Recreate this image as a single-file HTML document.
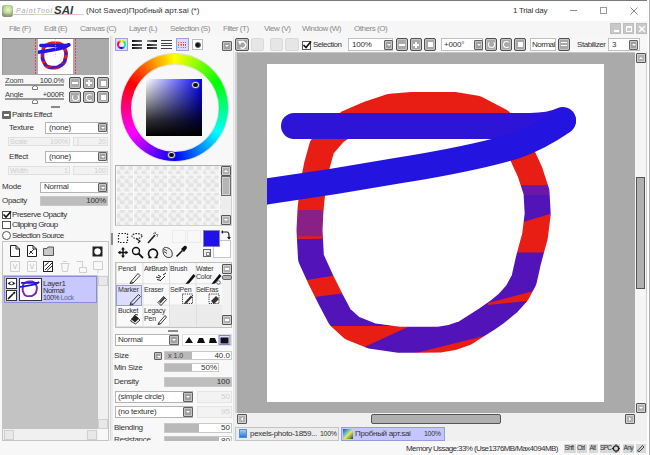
<!DOCTYPE html>
<html><head><meta charset="utf-8">
<style>
*{box-sizing:border-box;margin:0;padding:0}
html,body{width:650px;height:455px;overflow:hidden;background:#f0f0f0;font-family:"Liberation Sans",sans-serif;font-size:8px;color:#222}
.a{position:absolute}
.t{position:absolute;white-space:nowrap;line-height:10px}
.btn{position:absolute;width:12px;height:12px;border:1px solid #505050;border-radius:2px;background:#a9a9a9;box-shadow:inset 0 0 0 1px #c6c6c6}
.dd{position:absolute;width:9px;height:9px;border:1px solid #606060;border-radius:1px;background:#a0a0a0;box-shadow:inset 0 0 0 1px #c4c4c4}
.dd:after{content:"";position:absolute;left:2px;top:3px;border-left:2px solid transparent;border-right:2px solid transparent;border-top:2px solid #fff}
.combo{position:absolute;background:#fff;border:1px solid #b4b4b4}
.sl{position:absolute;background:#f4f4f4;border:1px solid #c8c8c8}
.fill{position:absolute;left:0;top:0;bottom:0;background:#b9b9b9}
.sb{position:absolute;background:#f0f0f0}
.sbb{position:absolute;width:10px;height:10px;border:1px solid #555;border-radius:1px;background:#b0b0b0;box-shadow:inset 0 0 0 1px #d0d0d0}
.gray{color:#8a8a8a}
</style></head><body>

<!-- title bar -->
<div class="a" style="left:0;top:0;width:650px;height:21px;background:#fff;border-top:1px solid #7a7a7a"></div>


<!-- menu bar -->
<div class="a" style="left:0;top:21px;width:648px;height:15px;background:#f6f6f6"></div>

<!-- title content -->
<div class="a" style="left:1.5px;top:5px;width:11px;height:11.5px;border-radius:3px;background:radial-gradient(circle at 55% 40%,#eaf5c0 0%,#c8e0a0 35%,#8fb880 70%,#6f9070 100%);box-shadow:inset 0 -3px 2px rgba(140,90,110,.35)"></div>
<div class="t" style="left:16px;top:6px;font-size:7px;font-style:italic;color:#a8a8a8;letter-spacing:0.9px">PaintTool</div>
<div class="a" style="left:12px;top:14px;width:72px;height:1px;background:linear-gradient(90deg,#d8b8e0,#c8e0b0 40%,#e8b0c8 80%,#f4d0d0)"></div>
<div class="t" style="left:54px;top:4px;font-size:11.5px;line-height:13px;font-weight:bold;font-style:italic;color:#3a3a3a">SAI</div>
<div class="t" style="left:86px;top:6px;font-size:8px;color:#333">(Not Saved)Пробный арт.sai (*)</div>
<div class="t" style="left:513px;top:6px;font-size:8px;color:#333;letter-spacing:-0.25px">1 Trial day</div>
<div class="a" style="left:570px;top:10px;width:7px;height:1px;background:#8a8a8a"></div>
<div class="a" style="left:600px;top:6.5px;width:7px;height:7px;border:1px solid #9a9a9a"></div>
<svg class="a" style="left:630px;top:7px" width="8" height="8"><path d="M0.5,0.5 L7.5,7.5 M7.5,0.5 L0.5,7.5" stroke="#8a8a8a" stroke-width="1"/></svg>

<!-- menu -->
<div class="t gray" style="left:9px;top:24px;font-size:8px;letter-spacing:-0.45px">File (F)</div>
<div class="t gray" style="left:44px;top:24px;font-size:8px;letter-spacing:-0.45px">Edit (E)</div>
<div class="t gray" style="left:80px;top:24px;font-size:8px;letter-spacing:-0.45px">Canvas (C)</div>
<div class="t gray" style="left:129px;top:24px;font-size:8px;letter-spacing:-0.45px">Layer (L)</div>
<div class="t gray" style="left:170px;top:24px;font-size:8px;letter-spacing:-0.45px">Selection (S)</div>
<div class="t gray" style="left:223px;top:24px;font-size:8px;letter-spacing:-0.45px">Filter (T)</div>
<div class="t gray" style="left:264px;top:24px;font-size:8px;letter-spacing:-0.45px">View (V)</div>
<div class="t gray" style="left:302px;top:24px;font-size:8px;letter-spacing:-0.45px">Window (W)</div>
<div class="t gray" style="left:354px;top:24px;font-size:8px;letter-spacing:-0.45px">Others (O)</div>
<!-- mdi buttons -->
<div class="a" style="left:610px;top:23px;width:11px;height:10.5px;background:#c9c9c9;border:1px solid #bdbdbd"><div class="a" style="left:2.5px;top:5.5px;width:5px;height:2px;background:#fff"></div></div>
<div class="a" style="left:623px;top:23px;width:10.5px;height:10.5px;background:#c9c9c9;border:1px solid #bdbdbd"><div class="a" style="left:2px;top:2px;width:5.5px;height:5.5px;border:1px solid #fff;border-top-width:2px"></div></div>
<div class="a" style="left:636px;top:23px;width:10.5px;height:10.5px;background:#c9c9c9;border:1px solid #bdbdbd"><svg class="a" style="left:1px;top:1px" width="8" height="8"><path d="M1.2,1.2 L6.8,6.8 M6.8,1.2 L1.2,6.8" stroke="#fff" stroke-width="1.5"/></svg></div>

<!-- left panel bg -->
<div class="a" style="left:0;top:36px;width:110px;height:405px;background:#f7f7f7"></div>
<div class="a" style="left:110px;top:36px;width:1px;height:405px;background:#d8d8d8"></div>

<!-- ===== LEFT PANEL ===== -->
<div class="a" style="left:2px;top:38px;width:107px;height:37px;background:#aaa;border-top:1px solid #7c7c7c;border-left:1px solid #999"></div>
<div class="a" style="left:38px;top:39px;width:35px;height:35px;background:#fff;overflow:hidden">
<svg width="35" height="35" viewBox="267 64 337 338"><g mask="url(#ring2)"><use href="#stripes"/></g><use href="#b1" stroke="#2d14d7" stroke-width="34" fill="none" stroke-linecap="round"/><use href="#b2" stroke="#2314e0" stroke-width="34" fill="none" stroke-linecap="round"/><line x1="435" y1="64" x2="435" y2="240" stroke="#f0a0c0" stroke-width="6" stroke-dasharray="14 14"/></svg>
</div>
<div class="a" style="left:35px;top:39px;width:1px;height:35px;background:repeating-linear-gradient(180deg,#e04060 0 2px,#d0a0a8 2px 3px)"></div>
<div class="a" style="left:75px;top:39px;width:1px;height:35px;background:repeating-linear-gradient(180deg,#e04060 0 2px,#d0a0a8 2px 3px)"></div>

<div class="t" style="left:5px;top:76px;font-size:7.5px;color:#444;letter-spacing:-0.2px">Zoom</div>
<div class="t" style="left:34px;top:76px;width:30px;text-align:right;font-size:7.5px;color:#333;letter-spacing:-0.2px">100.0%</div>
<div class="a" style="left:5px;top:84px;width:59px;height:2px;background:#9a9a9a"></div>
<svg class="a" style="left:32px;top:85px" width="6" height="5"><path d="M0.5,4.5 L0.5,2 L3,0.5 L5.5,2 L5.5,4.5 Z" fill="#fff" stroke="#777" stroke-width="1"/></svg>
<div class="t" style="left:5px;top:90px;font-size:7.5px;color:#444;letter-spacing:-0.2px">Angle</div>
<div class="t" style="left:34px;top:90px;width:30px;text-align:right;font-size:7.5px;color:#333;letter-spacing:-0.2px">+000R</div>
<div class="a" style="left:5px;top:98px;width:59px;height:2px;background:#9a9a9a"></div>
<svg class="a" style="left:32px;top:99px" width="6" height="5"><path d="M0.5,4.5 L0.5,2 L3,0.5 L5.5,2 L5.5,4.5 Z" fill="#fff" stroke="#777" stroke-width="1"/></svg>

<div class="btn" style="left:69px;top:77px"><div class="a" style="left:2px;top:4px;width:6px;height:2px;background:#fff"></div></div>
<div class="btn" style="left:83px;top:77px"><div class="a" style="left:2px;top:4px;width:6px;height:2px;background:#fff"></div><div class="a" style="left:4px;top:2px;width:2px;height:6px;background:#fff"></div></div>
<div class="btn" style="left:97px;top:77px"><div class="a" style="left:2.5px;top:2.5px;width:5px;height:5px;background:#fff"></div></div>
<div class="btn" style="left:69px;top:91px"><div class="a" style="left:1.5px;top:1.5px;width:7px;height:7px;border:1.5px solid #fff;border-radius:50%;border-top-color:transparent"></div></div>
<div class="btn" style="left:83px;top:91px"><div class="a" style="left:1.5px;top:1.5px;width:7px;height:7px;border:1.5px solid #fff;border-radius:50%;border-right-color:transparent"></div></div>
<div class="btn" style="left:97px;top:91px"><div class="a" style="left:2.5px;top:2.5px;width:5px;height:5px;background:#fff"></div></div>
<div class="a" style="left:51px;top:106px;width:9px;height:2px;background:#8a8a8a"></div>

<!-- paints effect -->
<div class="a" style="left:2px;top:110.5px;width:9px;height:8px;background:#6a6a6a;border-radius:1px"><div class="a" style="left:2px;top:3px;width:5px;height:2px;background:#fff"></div></div>
<div class="t" style="left:12px;top:110px;font-size:8px;color:#333;letter-spacing:-0.37px">Paints Effect</div>
<div class="t" style="left:9px;top:123px;font-size:8px;color:#333;letter-spacing:-0.2px">Texture</div>
<div class="combo" style="left:45px;top:122px;width:63px;height:12px"></div>
<div class="t" style="left:49px;top:123px;font-size:8px;color:#333;letter-spacing:-0.2px">(none)</div>
<div class="dd" style="left:98px;top:123px"></div>
<div class="sl" style="left:8px;top:137px;width:62px;height:9px;border-color:#e0e0e0;background:#f2f2f2"></div>
<div class="t" style="left:10px;top:137px;font-size:7px;color:#cfcfcf">Scale</div>
<div class="t" style="left:40px;top:137px;width:28px;text-align:right;font-size:7px;color:#cfcfcf">100%</div>
<div class="sl" style="left:73px;top:137px;width:35px;height:9px;border-color:#e0e0e0;background:#f2f2f2"></div>
<div class="a" style="left:77px;top:138px;width:2px;height:7px;background:#e6e6e6"></div>
<div class="t" style="left:80px;top:137px;width:26px;text-align:right;font-size:7px;color:#cfcfcf">20</div>

<div class="t" style="left:9px;top:152px;font-size:8px;color:#333;letter-spacing:-0.2px">Effect</div>
<div class="combo" style="left:45px;top:151px;width:63px;height:12px"></div>
<div class="t" style="left:49px;top:152px;font-size:8px;color:#333;letter-spacing:-0.2px">(none)</div>
<div class="dd" style="left:98px;top:152px"></div>
<div class="sl" style="left:8px;top:166px;width:62px;height:9px;border-color:#e0e0e0;background:#f2f2f2"></div>
<div class="t" style="left:10px;top:166px;font-size:7px;color:#cfcfcf">Width</div>
<div class="t" style="left:40px;top:166px;width:28px;text-align:right;font-size:7px;color:#cfcfcf">1</div>
<div class="sl" style="left:73px;top:166px;width:35px;height:9px;border-color:#e0e0e0;background:#f2f2f2"></div>
<div class="t" style="left:80px;top:166px;width:26px;text-align:right;font-size:7px;color:#cfcfcf">100</div>

<div class="t" style="left:2px;top:182px;font-size:8px;color:#333;letter-spacing:-0.2px">Mode</div>
<div class="combo" style="left:40px;top:182px;width:68px;height:11px"></div>
<div class="t" style="left:44px;top:182px;font-size:8px;color:#333;letter-spacing:-0.2px">Normal</div>
<div class="dd" style="left:98px;top:183px"></div>
<div class="t" style="left:2px;top:196px;font-size:8px;color:#333;letter-spacing:-0.3px">Opacity</div>
<div class="sl" style="left:40px;top:196px;width:68px;height:10px;background:#bdbdbd;border-color:#c8c8c8"></div>
<div class="t" style="left:60px;top:196px;width:46px;text-align:right;font-size:8px;color:#333;letter-spacing:-0.2px">100%</div>

<div class="a" style="left:2px;top:211px;width:9px;height:8px;background:#fff;border:1px solid #555"></div>
<svg class="a" style="left:2px;top:210px" width="10" height="9"><path d="M1.5,4.5 L4,7 L9,1.5" stroke="#111" stroke-width="1.6" fill="none"/></svg>
<div class="t" style="left:12px;top:210px;font-size:8px;color:#333;letter-spacing:-0.4px">Preserve Opacity</div>
<div class="a" style="left:2px;top:221px;width:9px;height:8px;background:#fff;border:1px solid #555"></div>
<div class="t" style="left:12px;top:220px;font-size:8px;color:#333;letter-spacing:-0.55px">Clipping Group</div>
<div class="a" style="left:2px;top:231px;width:9px;height:9px;background:#fff;border:1px solid #555;border-radius:50%"></div>
<div class="t" style="left:12px;top:231px;font-size:8px;color:#333;letter-spacing:-0.55px">Selection Source</div>

<!-- middle panel bg -->
<div class="a" style="left:111px;top:36px;width:122px;height:405px;background:#f8f8f8"></div>
<div class="a" style="left:233px;top:36px;width:1px;height:405px;background:#e6e6e6"></div>

<!-- ===== MIDDLE PANEL ===== -->
<div class="a" style="left:111px;top:36px;width:2px;height:405px;background:#ececec"></div>
<div class="a" style="left:111px;top:233px;width:2px;height:12px;background:#8c8c8c"></div>
<!-- color mode icons -->
<div class="a" style="left:115px;top:38px;width:13px;height:13px;background:#dcdcff;border:1px solid #a0a0e0"></div>
<div class="a" style="left:117px;top:40px;width:9px;height:9px;border-radius:50%;background:conic-gradient(#ff0,#0f0,#0ff,#00f,#f0f,#f00,#ff0)"></div>
<div class="a" style="left:119px;top:42px;width:5px;height:5px;border-radius:50%;background:#f4f4ff"></div>
<div class="a" style="left:132px;top:40px;width:10px;height:2px;background:linear-gradient(90deg,#111,#666)"></div>
<div class="a" style="left:132px;top:43.5px;width:10px;height:2px;background:linear-gradient(90deg,#111,#666)"></div>
<div class="a" style="left:132px;top:47px;width:10px;height:2px;background:linear-gradient(90deg,#111,#666)"></div>
<div class="a" style="left:147px;top:40px;width:10px;height:2px;background:linear-gradient(90deg,#999,#111)"></div>
<div class="a" style="left:147px;top:43.5px;width:10px;height:2px;background:linear-gradient(90deg,#111,#777)"></div>
<div class="a" style="left:147px;top:47px;width:10px;height:2px;background:linear-gradient(90deg,#111,#555)"></div>
<div class="a" style="left:161px;top:40px;width:11px;height:1px;background:#444"></div>
<div class="a" style="left:161px;top:42.5px;width:11px;height:1px;background:#444"></div>
<div class="a" style="left:161px;top:45px;width:11px;height:1px;background:#444"></div>
<div class="a" style="left:161px;top:47.5px;width:11px;height:1px;background:#444"></div>
<div class="a" style="left:176px;top:38px;width:13px;height:13px;background:#dcdcff;border:1px solid #a0a0e0"></div>
<div class="a" style="left:178px;top:41px;width:9px;height:7px;background:radial-gradient(circle,#e03030 0.6px,transparent 0.9px) 0 0/2.25px 2.33px,linear-gradient(90deg,#f44,#fd4,#4d4,#4ae,#a4e)"></div>
<div class="a" style="left:178px;top:41px;width:9px;height:7px;background:repeating-linear-gradient(90deg,transparent 0 1.25px,#dcdcff 1.25px 2.25px),repeating-linear-gradient(0deg,transparent 0 1.33px,#dcdcff 1.33px 2.33px)"></div>
<div class="a" style="left:192px;top:39px;width:11px;height:11px;background:#fff;border:1px solid #bbb"></div>
<div class="a" style="left:194.5px;top:41.5px;width:6px;height:6px;border-radius:50%;background:radial-gradient(circle at 45% 50%,#111 30%,#888 75%,transparent 80%)"></div>

<!-- color wheel -->
<div class="a" style="left:120px;top:53px;width:109px;height:109px;border-radius:50%;background:#dcdcdc"></div>
<div class="a" style="left:121px;top:54px;width:107px;height:107px;border-radius:50%;background:conic-gradient(#ff0 0deg,#0f0 60deg,#0ff 120deg,#00f 180deg,#f0f 240deg,#f00 300deg,#ff0 360deg)"></div>
<div class="a" style="left:130.5px;top:63.5px;width:88px;height:88px;border-radius:50%;background:#e4e4e4"></div>
<div class="a" style="left:131.5px;top:64.5px;width:86px;height:86px;border-radius:50%;background:#f8f8f8"></div>
<div class="a" style="left:145.5px;top:78.5px;width:56.5px;height:57px;background:linear-gradient(180deg,rgba(0,0,0,0) 0%,rgba(0,0,0,.42) 40%,rgba(0,0,0,.8) 72%,#000 100%),linear-gradient(90deg,#fff 0%,#0000ff 100%)"></div>
<div class="a" style="left:192px;top:81.5px;width:6.5px;height:6.5px;border-radius:50%;background:#111;border:1.5px solid #e8e8e8;box-shadow:0 0 0 0.6px #666"></div>
<div class="a" style="left:168px;top:151.5px;width:6.5px;height:6.5px;border-radius:50%;background:#111;border:1.5px solid #e8e8e8;box-shadow:0 0 0 0.6px #666"></div>


<!-- palette -->
<div class="a" style="left:115px;top:165px;width:117px;height:61px;border:1px solid #b0b0b0;border-right-color:#d0d0d0;border-bottom-color:#d0d0d0;background:
linear-gradient(90deg,#fcfcfc 1px,transparent 1px) 17px 0/17.2px 100%,
linear-gradient(0deg,transparent 16.2px,#fcfcfc 16.2px) 0 -8.7px/100% 17.2px,
conic-gradient(#e3e3e3 25%,#f3f3f3 0 50%,#e3e3e3 0 75%,#f3f3f3 0) 0 0/8.6px 8.6px"></div>
<div class="sb" style="left:221px;top:166px;width:10px;height:59px;background:#ededed"></div>
<div class="sbb" style="left:221px;top:166px"><div class="a" style="left:2px;top:2.5px;border-left:2.5px solid transparent;border-right:2.5px solid transparent;border-bottom:2.5px solid #fff"></div></div>
<div class="a" style="left:221px;top:176px;width:10px;height:20px;border:1px solid #6a6a6a;background:#b5b5b5;box-shadow:inset 0 0 0 1px #d0d0d0"></div>
<div class="sbb" style="left:221px;top:215px"><div class="a" style="left:2px;top:3px;border-left:2.5px solid transparent;border-right:2.5px solid transparent;border-top:2.5px solid #fff"></div></div>

<!-- tools -->
<svg class="a" style="left:116px;top:230px" width="60" height="30">
<rect x="2.5" y="3.5" width="9" height="9" fill="none" stroke="#222" stroke-width="1.2" stroke-dasharray="1.5 1.5"/>
<ellipse cx="21" cy="6" rx="5" ry="2.5" fill="none" stroke="#222" stroke-width="1.2" stroke-dasharray="1.5 1.2"/>
<path d="M20,8.5 L24,11 L22,13" fill="none" stroke="#222" stroke-width="1.2"/>
<path d="M32,13 L39,5" stroke="#222" stroke-width="1.6"/>
<path d="M39,3 L41,5 M37,4 L40,2 M41,7 L42,4" stroke="#555" stroke-width="0.8"/>
<path d="M7,18 L7,27 M2.5,22.5 L11.5,22.5" stroke="#111" stroke-width="1.5"/>
<path d="M7,17 L5,19.5 L9,19.5 Z M7,28 L5,25.5 L9,25.5 Z M2,22.5 L4.5,20.5 L4.5,24.5 Z M12,22.5 L9.5,20.5 L9.5,24.5 Z" fill="#111"/>
<circle cx="20" cy="21" r="3.5" fill="none" stroke="#111" stroke-width="1.4"/>
<path d="M22.5,23.5 L27,28" stroke="#111" stroke-width="1.8"/>
<path d="M34,27 A4.5,4.5 0 1 1 40,27" fill="none" stroke="#111" stroke-width="1.6"/>
<path d="M32.5,27.5 L35.5,27.5 M38.5,27.5 L41.5,27.5" stroke="#111" stroke-width="1.4"/>
<path d="M47,20 C47,17 50,17 52,18 C55,19 57,22 56,26 C55,28 51,28 49,26 C47,24 47,22 47,20 Z" fill="#eee" stroke="#222" stroke-width="0.9"/>
<path d="M48,19 L51,21 M48,21.5 L51,23.5" stroke="#222" stroke-width="0.8"/>
</svg>
<div class="a" style="left:172px;top:229.5px;width:14px;height:13.5px;border:1px solid #ececec"></div>
<div class="a" style="left:186.5px;top:229.5px;width:14px;height:13.5px;border:1px solid #ececec"></div>
<svg class="a" style="left:175px;top:245px" width="13" height="13"><path d="M1.5,11.5 L7.5,5.5" stroke="#111" stroke-width="1.6"/><path d="M6,4 L9.5,0.8 Q12,0.5 12,3 L9,7 Z" fill="#111"/></svg>
<div class="a" style="left:203px;top:230px;width:17px;height:17px;background:#1f12e6;border:1px solid #9898c8;box-shadow:inset 0 0 0 1px #fff"></div>
<div class="a" style="left:213px;top:240px;width:18px;height:18px;background:#fff;border:1px solid #c4c4c4"></div>
<div class="a" style="left:203px;top:230px;width:17px;height:17px;background:#1f12e6;border:1px solid #7f7fbf"></div>
<svg class="a" style="left:221px;top:230px" width="10" height="10"><path d="M2,2 L6,2 Q8,2 8,6 L8,9" fill="none" stroke="#222" stroke-width="1.2"/><path d="M2,0 L0,2 L2,4 Z M6,7 L10,7 L8,9.5 Z" fill="#222"/></svg>
<div class="a" style="left:203px;top:249px;width:8px;height:8px;border:1px solid #666;background:#eee"><div class="a" style="left:2px;top:2px;width:4px;height:4px;border:1px solid #888"></div></div>

<!-- tool grid -->
<div class="a" style="left:115px;top:262px;width:117px;height:66px;border:1px solid #c0c0c0;background:#fafafa"></div>
<div class="a" style="left:116px;top:263px;width:106px;height:64px;background:
linear-gradient(90deg,#dedede 1px,transparent 1px) 26.5px 0/26.5px 100%,
linear-gradient(0deg,#dedede 1px,transparent 1px) 0 21.3px/100% 21.3px"></div>
<div class="a" style="left:169px;top:306px;width:53px;height:21px;background:#ebebeb;border-left:1px solid #dedede"></div>
<div class="a" style="left:195.5px;top:306px;width:1px;height:21px;background:#dedede"></div>
<div class="a" style="left:116px;top:284.5px;width:26px;height:21px;background:#dcdcff;border:1px solid #9a9ad8"></div>
<div class="t" style="left:118px;top:264px;font-size:7px;color:#333;letter-spacing:-0.2px">Pencil</div>
<div class="t" style="left:144px;top:264px;font-size:7px;color:#333;letter-spacing:-0.45px">AirBrush</div>
<div class="t" style="left:170px;top:264px;font-size:7px;color:#333;letter-spacing:-0.2px">Brush</div>
<div class="t" style="left:196px;top:264px;font-size:7px;color:#333;letter-spacing:-0.2px">Water</div>
<div class="t" style="left:196px;top:272px;font-size:7px;color:#333;letter-spacing:-0.2px">Color</div>
<div class="t" style="left:118px;top:285px;font-size:7px;color:#333;letter-spacing:-0.2px">Marker</div>
<div class="t" style="left:144px;top:285px;font-size:7px;color:#333;letter-spacing:-0.2px">Eraser</div>
<div class="t" style="left:170px;top:285px;font-size:7px;color:#333;letter-spacing:-0.2px">SelPen</div>
<div class="t" style="left:196px;top:285px;font-size:7px;color:#333;letter-spacing:-0.35px">SelEras</div>
<div class="t" style="left:118px;top:306px;font-size:7px;color:#333;letter-spacing:-0.2px">Bucket</div>
<div class="t" style="left:144px;top:306px;font-size:7px;color:#333;letter-spacing:-0.2px">Legacy</div>
<div class="t" style="left:144px;top:314px;font-size:7px;color:#333;letter-spacing:-0.2px">Pen</div>
<svg class="a" style="left:116px;top:263px" width="106" height="64">
<g fill="none" stroke="#222" stroke-width="0.9" stroke-linejoin="round">
<path d="M15,18.5 L22,10.5 L24,12.5 L17,20 Z M15,18.5 L14,20.5 L17,20"/>
<path d="M15,39.5 L22.5,31.5 L24.5,33.5 L17,41.5 Z M15,39.5 L14,42 L17,41.5"/>
<path d="M42,39.5 L47.5,33.5 L50.5,36.5 L45,42.5 Z"/>
<path d="M14.5,58 L19,53 L24,57 L19.5,61 Z"/>
<path d="M43,59.5 L49,52.5 L50.5,54 L44.5,61 Z M43,59.5 L42,61.5 L44.5,61"/>
<path d="M40,14 L44,15 M41,16.5 L45,17.5 M42,12 L45,14 M44,18 L49,13 M47,12 L50,10" stroke-width="1"/>
<path d="M66.5,31 L76.5,31 L76.5,40.5 L66.5,40.5 Z M93,31 L103,31 L103,40.5 L93,40.5 Z" stroke-dasharray="1.2 1"/>
</g>
<path d="M43,39 L48,33.5 L49.5,35 L44.5,40.5 Z" fill="#444"/>
<path d="M15,56 L19,52 L23,55.5 L19,59.5 Z" fill="#222"/>
<path d="M17.5,53.5 Q19,50 22,52" fill="none" stroke="#222" stroke-width="0.9"/>
<path d="M71,19 L77.5,11 L79.5,13 L73,20.5 Z M71,19 L69.5,21 L73,20.5 Z" fill="#111"/>
<path d="M97,19 L103.5,11 L105.5,13 L99,20.5 Z M97,19 L95.5,21 L99,20.5 Z" fill="#111"/>
<circle cx="102.5" cy="19.5" r="1.8" fill="none" stroke="#555" stroke-width="0.8"/>
<path d="M69,39 L75,32.5 L76.5,34 L70.5,40.5 Z M69,39 L68,41 L70.5,40.5 Z" fill="#333"/><path d="M95,38 L100,33 L103,36 L98,41 Z" fill="#333"/>
</svg>
<div class="sb" style="left:222px;top:263px;width:9px;height:64px;background:#f2f2f2"></div>
<div class="sbb" style="left:222px;top:264px;width:10px;height:10px"><div class="a" style="left:2px;top:3px;width:4px;height:2px;background:#fff"></div></div>
<div class="a" style="left:222px;top:275px;width:10px;height:5px;border:1px solid #666;border-radius:2px;background:#b8b8b8"></div>
<div class="sbb" style="left:222px;top:315px;width:10px;height:10px"><div class="a" style="left:2px;top:3px;width:4px;height:2px;background:#fff"></div></div>
<div class="a" style="left:168px;top:330px;width:10px;height:2px;background:#8a8a8a"></div>

<!-- brush settings -->
<div class="combo" style="left:115px;top:334px;width:64px;height:12px"></div>
<div class="t" style="left:118px;top:335px;font-size:8px;color:#333;letter-spacing:-0.2px">Normal</div>
<div class="dd" style="left:169px;top:335px;width:10px;height:10px"></div>
<div class="a" style="left:182px;top:334px;width:50px;height:12px;background:#fff;border:1px solid #dcdcdc"></div>
<svg class="a" style="left:183px;top:335px" width="48" height="10">
<path d="M2,8 L6,2 L10,8 Z" fill="#111"/>
<path d="M14,8 L16,3 L20,3 L22,8 Z" fill="#111"/>
<path d="M26,8 L27,3 L32,3 L34,8 Z" fill="#111"/>
<rect x="36" y="0.5" width="11" height="9" fill="#dcdcff" stroke="#8080c8"/>
<rect x="37.5" y="2.5" width="8" height="6" fill="#111"/>
</svg>
<div class="t" style="left:114px;top:351px;font-size:8px;color:#333;letter-spacing:-0.2px">Size</div>
<div class="dd" style="left:154px;top:352px;width:8px;height:8px"></div>
<div class="sl" style="left:164px;top:351px;width:68px;height:9px;background:#fff;border-color:#c8c8c8"><div class="fill" style="width:27px"></div></div>
<div class="t" style="left:168px;top:351px;font-size:7px;color:#444">x 1.0</div>
<div class="t" style="left:190px;top:351px;width:40px;text-align:right;font-size:8px;color:#333">40.0</div>
<div class="t" style="left:114px;top:363px;font-size:8px;color:#333;letter-spacing:-0.3px">Min Size</div>
<div class="sl" style="left:164px;top:363px;width:55px;height:9px;background:#fff;border-color:#c8c8c8"><div class="fill" style="width:27px"></div></div>
<div class="t" style="left:180px;top:363px;width:37px;text-align:right;font-size:8px;color:#333">50%</div>
<div class="t" style="left:114px;top:377px;font-size:8px;color:#333;letter-spacing:-0.3px">Density</div>
<div class="sl" style="left:164px;top:377px;width:68px;height:10px;background:#bdbdbd;border-color:#c8c8c8"></div>
<div class="t" style="left:190px;top:377px;width:40px;text-align:right;font-size:8px;color:#333">100</div>

<div class="combo" style="left:115px;top:391px;width:78px;height:12px"></div>
<div class="t" style="left:118px;top:392px;font-size:8px;color:#333;letter-spacing:-0.2px">(simple circle)</div>
<div class="dd" style="left:183px;top:392px;width:10px;height:10px"></div>
<div class="sl" style="left:197px;top:391px;width:35px;height:12px;border-color:#e4e4e4;background:#f3f3f3"></div>
<div class="t" style="left:200px;top:392px;width:30px;text-align:right;font-size:8px;color:#d0d0d0">50</div>
<div class="combo" style="left:115px;top:406px;width:78px;height:12px"></div>
<div class="t" style="left:118px;top:407px;font-size:8px;color:#333;letter-spacing:-0.2px">(no texture)</div>
<div class="dd" style="left:183px;top:407px;width:10px;height:10px"></div>
<div class="sl" style="left:197px;top:406px;width:35px;height:12px;border-color:#e4e4e4;background:#f3f3f3"></div>
<div class="t" style="left:200px;top:407px;width:30px;text-align:right;font-size:8px;color:#d0d0d0">95</div>
<div class="t" style="left:114px;top:423px;font-size:8px;color:#333;letter-spacing:-0.3px">Blending</div>
<div class="sl" style="left:164px;top:423px;width:68px;height:10px;background:#fff;border-color:#c8c8c8"><div class="fill" style="width:34px"></div></div>
<div class="t" style="left:190px;top:423px;width:40px;text-align:right;font-size:8px;color:#333">50</div>
<div class="t" style="left:114px;top:435px;font-size:8px;color:#333;letter-spacing:-0.3px">Resistance</div>
<div class="sl" style="left:164px;top:436px;width:68px;height:10px;background:#fff;border-color:#c8c8c8"><div class="fill" style="width:54px"></div></div>
<div class="t" style="left:190px;top:436px;width:40px;text-align:right;font-size:8px;color:#333">80</div>

<!-- toolbar bg -->
<div class="a" style="left:234px;top:36px;width:414px;height:16px;background:#f7f7f7"></div>


<!-- ===== TOOLBAR ===== -->
<div class="dd" style="left:222px;top:41px;width:10px;height:10px"></div>
<div class="btn" style="left:235px;top:38px;width:14px;height:13px;background:#a4a4a4"><svg class="a" style="left:1px;top:1px" width="10" height="10"><path d="M3,3 A3.2,3.2 0 1 1 3.5,7.5" fill="none" stroke="#fff" stroke-width="1.4"/><path d="M1,1 L5,1 L3,5 Z" fill="#fff"/></svg></div>
<div class="a" style="left:251px;top:38px;width:13px;height:13px;border:1px solid #dadada;border-radius:2px;background:#e6e6e6"></div>
<div class="a" style="left:269.5px;top:38px;width:13px;height:13px;border:1px solid #dadada;border-radius:2px;background:#e6e6e6"></div>
<div class="a" style="left:285px;top:38px;width:13.5px;height:13px;border:1px solid #dadada;border-radius:2px;background:#e6e6e6"></div>
<div class="a" style="left:302px;top:41px;width:9px;height:9px;background:#fff;border:1px solid #555"></div>
<svg class="a" style="left:302px;top:40px" width="10" height="10"><path d="M1.5,5 L4,7.5 L9,1.5" stroke="#111" stroke-width="1.6" fill="none"/></svg>
<div class="t" style="left:313px;top:40px;font-size:8px;color:#333;letter-spacing:-0.5px">Selection</div>
<div class="combo" style="left:348px;top:38px;width:45px;height:13px;border-color:#c0c0c0"></div>
<div class="t" style="left:352px;top:40px;font-size:8px;color:#333;letter-spacing:-0.2px">100%</div>
<div class="dd" style="left:384px;top:40px;width:9px;height:10px"></div>
<div class="btn" style="left:396px;top:38px;height:13px"><div class="a" style="left:2px;top:4.5px;width:6px;height:2px;background:#fff"></div></div>
<div class="btn" style="left:410px;top:38px;height:13px"><div class="a" style="left:2px;top:4.5px;width:6px;height:2px;background:#fff"></div><div class="a" style="left:4px;top:2.5px;width:2px;height:6px;background:#fff"></div></div>
<div class="btn" style="left:424px;top:38px;height:13px"><div class="a" style="left:2.5px;top:3px;width:5px;height:5px;background:#fff"></div></div>
<div class="combo" style="left:441px;top:38px;width:42px;height:13px;border-color:#c0c0c0"></div>
<div class="t" style="left:444px;top:40px;font-size:8px;color:#333;letter-spacing:-0.2px">+000°</div>
<div class="dd" style="left:474px;top:40px;width:9px;height:10px"></div>
<div class="btn" style="left:485px;top:38px;height:13px"><div class="a" style="left:1.5px;top:2px;width:7px;height:7px;border:1.5px solid #fff;border-radius:50%;border-top-color:transparent"></div></div>
<div class="btn" style="left:500px;top:38px;height:13px"><div class="a" style="left:1.5px;top:2px;width:7px;height:7px;border:1.5px solid #fff;border-radius:50%;border-right-color:transparent"></div></div>
<div class="btn" style="left:514px;top:38px;height:13px"><div class="a" style="left:2.5px;top:3px;width:5px;height:5px;background:#fff"></div></div>
<div class="combo" style="left:530px;top:38px;width:26px;height:13px;border-color:#c0c0c0"></div>
<div class="t" style="left:532px;top:40px;font-size:8px;color:#333;letter-spacing:-0.5px">Normal</div>
<div class="btn" style="left:558px;top:38px;height:13px"><div class="a" style="left:2px;top:3px;width:6px;height:1px;background:#fff"></div><div class="a" style="left:2px;top:6px;width:6px;height:1px;background:#fff"></div></div>
<div class="t" style="left:577px;top:40px;font-size:8px;color:#333;letter-spacing:-0.45px">Stabilizer</div>
<div class="combo" style="left:608px;top:38px;width:32px;height:13px;border-color:#c0c0c0"></div>
<div class="t" style="left:612px;top:40px;font-size:8px;color:#333">3</div>
<div class="dd" style="left:629px;top:40px;width:9px;height:10px"></div>

<!-- canvas -->
<div class="a" style="left:235px;top:52px;width:400px;height:361px;background:#aaaaaa;border-left:2px solid #d2d2d2;border-top:1px solid #c4c4c4"></div>
<div class="a" style="left:267px;top:64px;width:337px;height:338px;background:#fff"></div>


<!-- drawing -->
<svg class="a" style="left:267px;top:64px" width="337" height="338" viewBox="267 64 337 338">
<defs>
<path id="rp" d="M322,147 L334,133 L348,123 L370,113.5 L391,106.6 L412,105 L455,105 L476,108.5 L500,121 L515,138 L524,159 L530,172 L536.5,192 L537.7,214 L535,236 L528.5,260 L524,280 L517,293 L508,303 L497,312 L487,319 L476,326 L465,333 L452,337.5 L440,339.5 L420,339.7 L398,339.7 L372,336 L352,328 L340,317 L331,300 L321,280 L311,258 L309.5,230 L310.5,210 L313,185 L317,165 Z"/>
<path id="b1" d="M294,126 L530,126 C545,126 555,124 563,120"/>
<path id="b2" d="M250,194 L267,191.5 C320,184 365,176.5 400,170.3 C440,163.8 480,156.5 515,146 C535,139 550,130 563,121"/>
<mask id="ring" maskUnits="userSpaceOnUse" x="200" y="0" width="500" height="500"><use href="#rp" stroke="#fff" stroke-width="26" fill="none" stroke-linejoin="round"/></mask>
<mask id="ring2" maskUnits="userSpaceOnUse" x="200" y="0" width="500" height="500"><use href="#rp" stroke="#fff" stroke-width="36" fill="none" stroke-linejoin="round"/></mask>
<mask id="ring3" maskUnits="userSpaceOnUse" x="200" y="0" width="500" height="500"><use href="#rp" stroke="#fff" stroke-width="32" fill="none" stroke-linejoin="round"/></mask>
<g id="stripes">
<rect x="260" y="60" width="350" height="350" fill="#5213b8"/>
<polygon fill="#e81e14" points="260,60 610,60 610,185.4 420,185.4 420,210 260,210"/>
<polygon fill="#8a1f85" points="260,210 420,210 420,235.5 260,236.5"/>
<polygon fill="#e81e14" points="260,236.5 420,235.5 420,237.5 260,239.5"/>
<polygon fill="#e81e14" points="270,286 350,273 360,291 270,303"/>
<polygon fill="#e81e14" points="290,326 410,326 332,362 290,362"/>
<polygon fill="#e81e14" points="380,362 505,330.75 505,362"/>
<polygon fill="#e81e14" points="488,303 545,288 545,299 488,305"/>
<polygon fill="#e81e14" points="505,227.3 560,211 560,252.4 505,252.4"/>
<polygon fill="#6a18a8" points="500,185.4 560,185.4 560,195 500,195"/>
</g>
</defs>
<g mask="url(#ring)"><use href="#stripes"/></g>
<use href="#b1" stroke="#2d14d7" stroke-width="26" fill="none" stroke-linecap="round"/>
<use href="#b2" stroke="#2314e0" stroke-width="26" fill="none" stroke-linecap="round"/>
</svg>

<!-- bottom bg -->
<div class="a" style="left:0;top:441px;width:648px;height:14px;background:#f7f7f7"></div>


<!-- ===== SCROLLBARS / TABS / STATUS ===== -->
<div class="a" style="left:635px;top:52px;width:12px;height:375px;background:#f5f5f5"></div>
<div class="a" style="left:646px;top:52px;width:1px;height:375px;background:#d0d0d0"></div>
<div class="sbb" style="left:636px;top:53px;width:10px;height:10px"><div class="a" style="left:2px;top:2.5px;border-left:2.5px solid transparent;border-right:2.5px solid transparent;border-bottom:2.5px solid #fff"></div></div>
<div class="a" style="left:636px;top:177px;width:9px;height:112px;border:1px solid #555;background:#b0b0b0"></div>
<div class="sbb" style="left:636px;top:403px;width:10px;height:10px"><div class="a" style="left:2px;top:3px;border-left:2.5px solid transparent;border-right:2.5px solid transparent;border-top:2.5px solid #fff"></div></div>
<div class="a" style="left:235px;top:413px;width:413px;height:14px;background:#f0f0f0"></div>
<div class="sbb" style="left:237px;top:414px;width:10px;height:10px"><div class="a" style="left:2.5px;top:2px;border-top:2.5px solid transparent;border-bottom:2.5px solid transparent;border-right:2.5px solid #fff"></div></div>
<div class="a" style="left:371px;top:414px;width:130px;height:9.5px;border:1px solid #555;border-radius:2px;background:#b0b0b0"></div>
<div class="sbb" style="left:625px;top:414px;width:10px;height:10px"><div class="a" style="left:3px;top:2px;border-top:2.5px solid transparent;border-bottom:2.5px solid transparent;border-left:2.5px solid #fff"></div></div>

<div class="a" style="left:235px;top:427px;width:104px;height:14px;background:#ececec;border:1px solid #c4c4c4"></div>
<div class="a" style="left:239px;top:429px;width:8px;height:9px;background:linear-gradient(180deg,#9fd0f8,#1f7fd8);border:1px solid #5a8fc8"></div>
<div class="t" style="left:250px;top:429px;font-size:8px;color:#333;letter-spacing:-0.3px">pexels-photo-1859...</div>
<div class="t" style="left:320px;top:429px;font-size:7px;color:#333;letter-spacing:-0.3px">100%</div>
<div class="a" style="left:341px;top:427px;width:104px;height:14px;background:#c6c6ff;border:1px solid #9a9ae4"></div>
<div class="a" style="left:343px;top:429px;width:10px;height:10px;background:linear-gradient(135deg,#2a4a8a 0%,#58b0e0 30%,#f0e060 55%,#60a040 80%,#204020 100%)"></div>
<div class="t" style="left:355px;top:429px;font-size:8px;color:#333;letter-spacing:-0.3px">Пробный арт.sai</div>
<div class="t" style="left:424px;top:429px;font-size:7px;color:#333;letter-spacing:-0.3px">100%</div>

<div class="t" style="left:406px;top:444px;font-size:8px;color:#333;letter-spacing:-0.6px">Memory Ussage:33% (Use1376MB/Max4094MB)</div>
<div class="a" style="left:564px;top:443.5px;width:11.5px;height:9px;background:#d8d8d8"></div>
<div class="t" style="left:564.5px;top:444px;font-size:6.5px;line-height:8px;color:#2a2a2a;letter-spacing:-0.7px">Shft</div>
<div class="a" style="left:576.5px;top:443.5px;width:10.5px;height:9px;background:#d8d8d8"></div>
<div class="t" style="left:577px;top:444px;font-size:6.5px;line-height:8px;color:#2a2a2a;letter-spacing:-0.6px">Ctrl</div>
<div class="a" style="left:589px;top:443.5px;width:9px;height:9px;background:#d8d8d8"></div>
<div class="t" style="left:589.5px;top:444px;font-size:6.5px;line-height:8px;color:#2a2a2a;letter-spacing:-0.5px">Alt</div>
<div class="a" style="left:599.5px;top:443.5px;width:12px;height:9px;background:#d8d8d8"></div>
<div class="t" style="left:600px;top:444px;font-size:6.5px;line-height:8px;color:#2a2a2a;letter-spacing:-0.7px">SPC</div>
<div class="a" style="left:612px;top:443.5px;width:8px;height:9px;background:#d8d8d8"></div>
<svg class="a" style="left:612px;top:443.5px" width="8" height="9"><circle cx="4" cy="4.5" r="2.6" fill="none" stroke="#222" stroke-width="1.3"/><path d="M4,0 L3,1.2 L5,1.2 Z M4,9 L3,7.8 L5,7.8 Z M-0.2,4.5 L1,3.5 L1,5.5 Z M8.2,4.5 L7,3.5 L7,5.5 Z" fill="#222"/></svg>
<div class="a" style="left:623px;top:443.5px;width:11px;height:9px;background:#d8d8d8"></div>
<div class="t" style="left:623.5px;top:444px;font-size:6.5px;line-height:8px;color:#2a2a2a;letter-spacing:-0.6px">Any</div>
<div class="a" style="left:635.5px;top:443.5px;width:10px;height:9px;background:#d8d8d8"></div>
<svg class="a" style="left:636px;top:444px" width="9" height="8"><path d="M1.5,7 L6.5,1.5 L8,3 L3,8 Z" fill="none" stroke="#333" stroke-width="0.9"/></svg>

<!-- ===== LAYER PANEL ===== -->
<div class="a" style="left:2px;top:241px;width:107px;height:200px;background:#f8f8f8;border:1px solid #c4c4c4"></div>
<svg class="a" style="left:3px;top:242px" width="105" height="32">
<g fill="#fff" stroke="#222" stroke-width="1">
<path d="M7.5,3.5 L13,3.5 L16.5,7 L16.5,14.5 L7.5,14.5 Z"/>
<path d="M24.5,3.5 L30,3.5 L33.5,7 L33.5,14.5 L24.5,14.5 Z"/>
</g>
<path d="M13,3.5 L13,7 L16.5,7" fill="none" stroke="#222"/>
<path d="M30,3.5 L30,7 L33.5,7" fill="none" stroke="#222"/>
<path d="M26,12 L31,7 M27,9 L30,12" stroke="#333" stroke-width="1"/>
<path d="M40.5,6.5 L44,6.5 L45,5 L50.5,5 L50.5,13.5 L40.5,13.5 Z" fill="#c8c8c8" stroke="#555"/>
<rect x="89.5" y="4.5" width="10" height="10" fill="#222"/>
<circle cx="94.5" cy="9.5" r="3.2" fill="#fff"/>
<g fill="none" stroke="#cfcfcf" stroke-width="1">
<path d="M7.5,19.5 L16.5,19.5 L16.5,29.5 L7.5,29.5 Z M10,22 L12,27 L14,22"/>
<path d="M24.5,19.5 L33.5,19.5 L33.5,29.5 L24.5,29.5 Z M27,22 L29,27 L31,22"/>
<path d="M57.5,21.5 L66.5,21.5 M58.5,21.5 L59.5,29.5 L64.5,29.5 L65.5,21.5 M60,19.5 L64,19.5"/>
<path d="M73.5,19.5 L79.5,19.5 L79.5,25.5 M76.5,25.5 L83.5,25.5 L83.5,30.5 L76.5,30.5 Z"/>
<path d="M90.5,19.5 L99.5,19.5 L99.5,27.5 L90.5,27.5 Z M95,27.5 L95,31"/>
</g>
<rect x="40.5" y="19.5" width="9" height="10" fill="#fff" stroke="#222"/>
<path d="M42,28 L49,21 M41.5,24 L45.5,20.5 M44,28.5 L49,24" stroke="#222" stroke-width="1"/>
</svg>
<div class="a" style="left:3px;top:275px;width:95px;height:154px;background:#c3c3c3"></div>
<div class="a" style="left:4px;top:276px;width:93px;height:27px;background:#c8c8ff;border:1px solid #8c8cdc"></div>
<div class="a" style="left:6px;top:278px;width:11px;height:11px;background:#fff;border:1px solid #333"></div>
<svg class="a" style="left:6px;top:278px" width="11" height="11"><path d="M1.5,5.5 Q5.5,1.5 9.5,5.5 Q5.5,9 1.5,5.5 Z" fill="#222"/><circle cx="5.5" cy="5.3" r="1.3" fill="#fff"/></svg>
<div class="a" style="left:6px;top:290px;width:11px;height:11px;background:#fff;border:1px solid #333"></div>
<svg class="a" style="left:6px;top:290px" width="11" height="11"><path d="M2,9 L7,4" stroke="#111" stroke-width="1.6"/><path d="M6.5,3 L8.5,1.5 L9.5,2.5 L8,4.5 Z" fill="#111"/></svg>
<div class="a" style="left:19px;top:278px;width:23px;height:23px;background:#fff;border:1px solid #333;overflow:hidden">
<svg width="21" height="21" viewBox="267 64 337 338" style="position:absolute;left:0;top:0"><g mask="url(#ring3)"><rect x="200" y="0" width="500" height="500" fill="#7a2ab0"/></g><use href="#b1" stroke="#2d14d7" stroke-width="30" fill="none" stroke-linecap="round"/><use href="#b2" stroke="#2314e0" stroke-width="30" fill="none" stroke-linecap="round"/></svg>
</div>
<div class="t" style="left:43px;top:279px;font-size:8px;color:#333;letter-spacing:-0.3px">Layer1</div>
<div class="t" style="left:43px;top:286px;font-size:7.5px;color:#333;letter-spacing:-0.5px">Normal</div>
<div class="t" style="left:43px;top:293px;font-size:7px;color:#333;letter-spacing:-0.45px">100% <span style="color:#5a6aa0">Lock</span></div>
<div class="a" style="left:98px;top:275px;width:10px;height:154px;background:#f0f0f0"></div>
<div class="a" style="left:98px;top:276px;width:10px;height:10px;background:#e8e8e8;border:1px solid #d0d0d0"></div>
<div class="a" style="left:98px;top:419px;width:10px;height:10px;background:#e8e8e8;border:1px solid #d0d0d0"></div>
<div class="a" style="left:3px;top:429px;width:95px;height:11px;background:#f0f0f0"></div>
<div class="a" style="left:4px;top:430px;width:10px;height:10px;background:#e8e8e8;border:1px solid #d0d0d0"></div>
<div class="a" style="left:87px;top:430px;width:10px;height:10px;background:#e8e8e8;border:1px solid #d0d0d0"></div>

<div class="a" style="left:647px;top:0;width:1.5px;height:455px;background:#fbfbfb"></div>
<div class="a" style="left:648.5px;top:0;width:1.5px;height:455px;background:#b0b0b0"></div>
</body></html>
